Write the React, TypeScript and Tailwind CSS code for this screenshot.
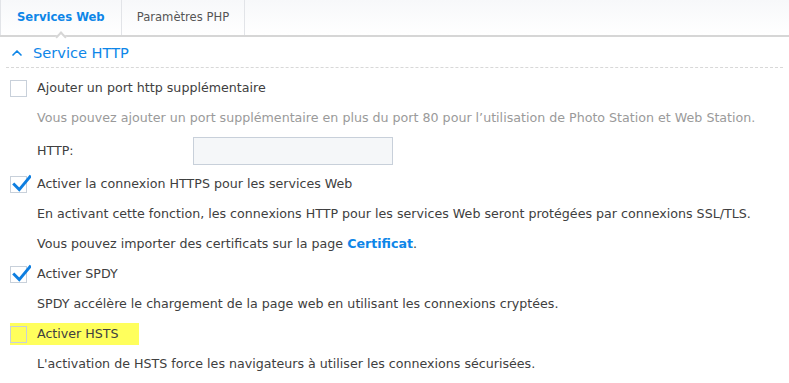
import { ChevronUp } from "lucide-react";

function Check({ checked, highlight }: { checked?: boolean; highlight?: boolean }) {
  return (
    <span
      className={`relative h-[17px] w-[17px] shrink-0 border border-[#c8d0da] ${highlight ? "bg-[#ffff5c]" : "bg-white"}`}
    >
      {checked && (
        <svg viewBox="0 0 17 17" className="absolute -top-[3px] left-[1px] h-[19px] w-[19px]">
          <path d="M2 9.5 L6.5 14 L16 2.5" fill="none" stroke="#0d7ee0" strokeWidth="2.6" strokeLinecap="square" />
        </svg>
      )}
    </span>
  );
}

function Row({ children, checked, highlight }: { children: React.ReactNode; checked?: boolean; highlight?: boolean }) {
  return (
    <div className="flex h-[30px] items-center pl-[10px]">
      <div className={`flex h-[22px] items-center ${highlight ? "bg-[#ffff5c] pr-[20px]" : ""}`}>
        <Check checked={checked} highlight={highlight} />
        <span className="ml-[10px] text-[#404040]">{children}</span>
      </div>
    </div>
  );
}

function Desc({ children, muted }: { children: React.ReactNode; muted?: boolean }) {
  return (
    <div className={`flex h-[30px] items-center pl-[37px] ${muted ? "text-[#9a9a9a]" : "text-[#404040]"}`}>
      {children}
    </div>
  );
}

export default function App() {
  return (
    <div
      className="h-[383px] w-[789px] overflow-hidden bg-white text-[12.65px]"
      style={{ fontFamily: '"DejaVu Sans", Verdana, sans-serif' }}
    >
      <div className="relative flex h-[37px] border-b-2 border-[#d6d6d6] bg-gradient-to-b from-[#f7f8fa] to-white text-[11.6px]">
        <div className="relative flex items-center border-l border-r border-[#e2e4e8] px-[16px] font-bold text-[#0e86e8]">
          Services Web
          <span className="absolute bottom-[-2px] left-1/2 h-[8px] w-[8px] -translate-x-1/2 translate-y-1/2 rotate-45 border-l-2 border-t-2 border-[#d6d6d6] bg-white" />
        </div>
        <div className="flex items-center border-r border-[#e2e4e8] px-[15px] text-[#555]">Paramètres PHP</div>
      </div>

      <div className="mx-[6px] mt-[2px] flex h-[29px] items-center border-b border-dashed border-[#d8d8d8]">
        <ChevronUp size={16} strokeWidth={2.5} className="ml-[3px] text-[#0e86e8]" />
        <span className="ml-[8px] text-[14.6px] text-[#0e86e8]">Service HTTP</span>
      </div>

      <div className="pt-[5px]">
        <Row>Ajouter un port http supplémentaire</Row>
        <Desc muted>Vous pouvez ajouter un port supplémentaire en plus du port 80 pour l’utilisation de Photo Station et Web Station.</Desc>
        <div className="flex h-[36px] items-center pl-[37px] text-[#404040]">
          <span className="w-[156px]">HTTP:</span>
          <span className="h-[28px] w-[200px] border border-[#c8d0da] bg-[#f5f7f9]" />
        </div>
        <Row checked>Activer la connexion HTTPS pour les services Web</Row>
        <Desc>En activant cette fonction, les connexions HTTP pour les services Web seront protégées par connexions SSL/TLS.</Desc>
        <Desc>
          Vous pouvez importer des certificats sur la page&nbsp;<span className="font-bold text-[#0e86e8]">Certificat</span>.
        </Desc>
        <Row checked>Activer SPDY</Row>
        <Desc>SPDY accélère le chargement de la page web en utilisant les connexions cryptées.</Desc>
        <Row highlight>Activer HSTS</Row>
        <Desc>L'activation de HSTS force les navigateurs à utiliser les connexions sécurisées.</Desc>
      </div>
    </div>
  );
}
